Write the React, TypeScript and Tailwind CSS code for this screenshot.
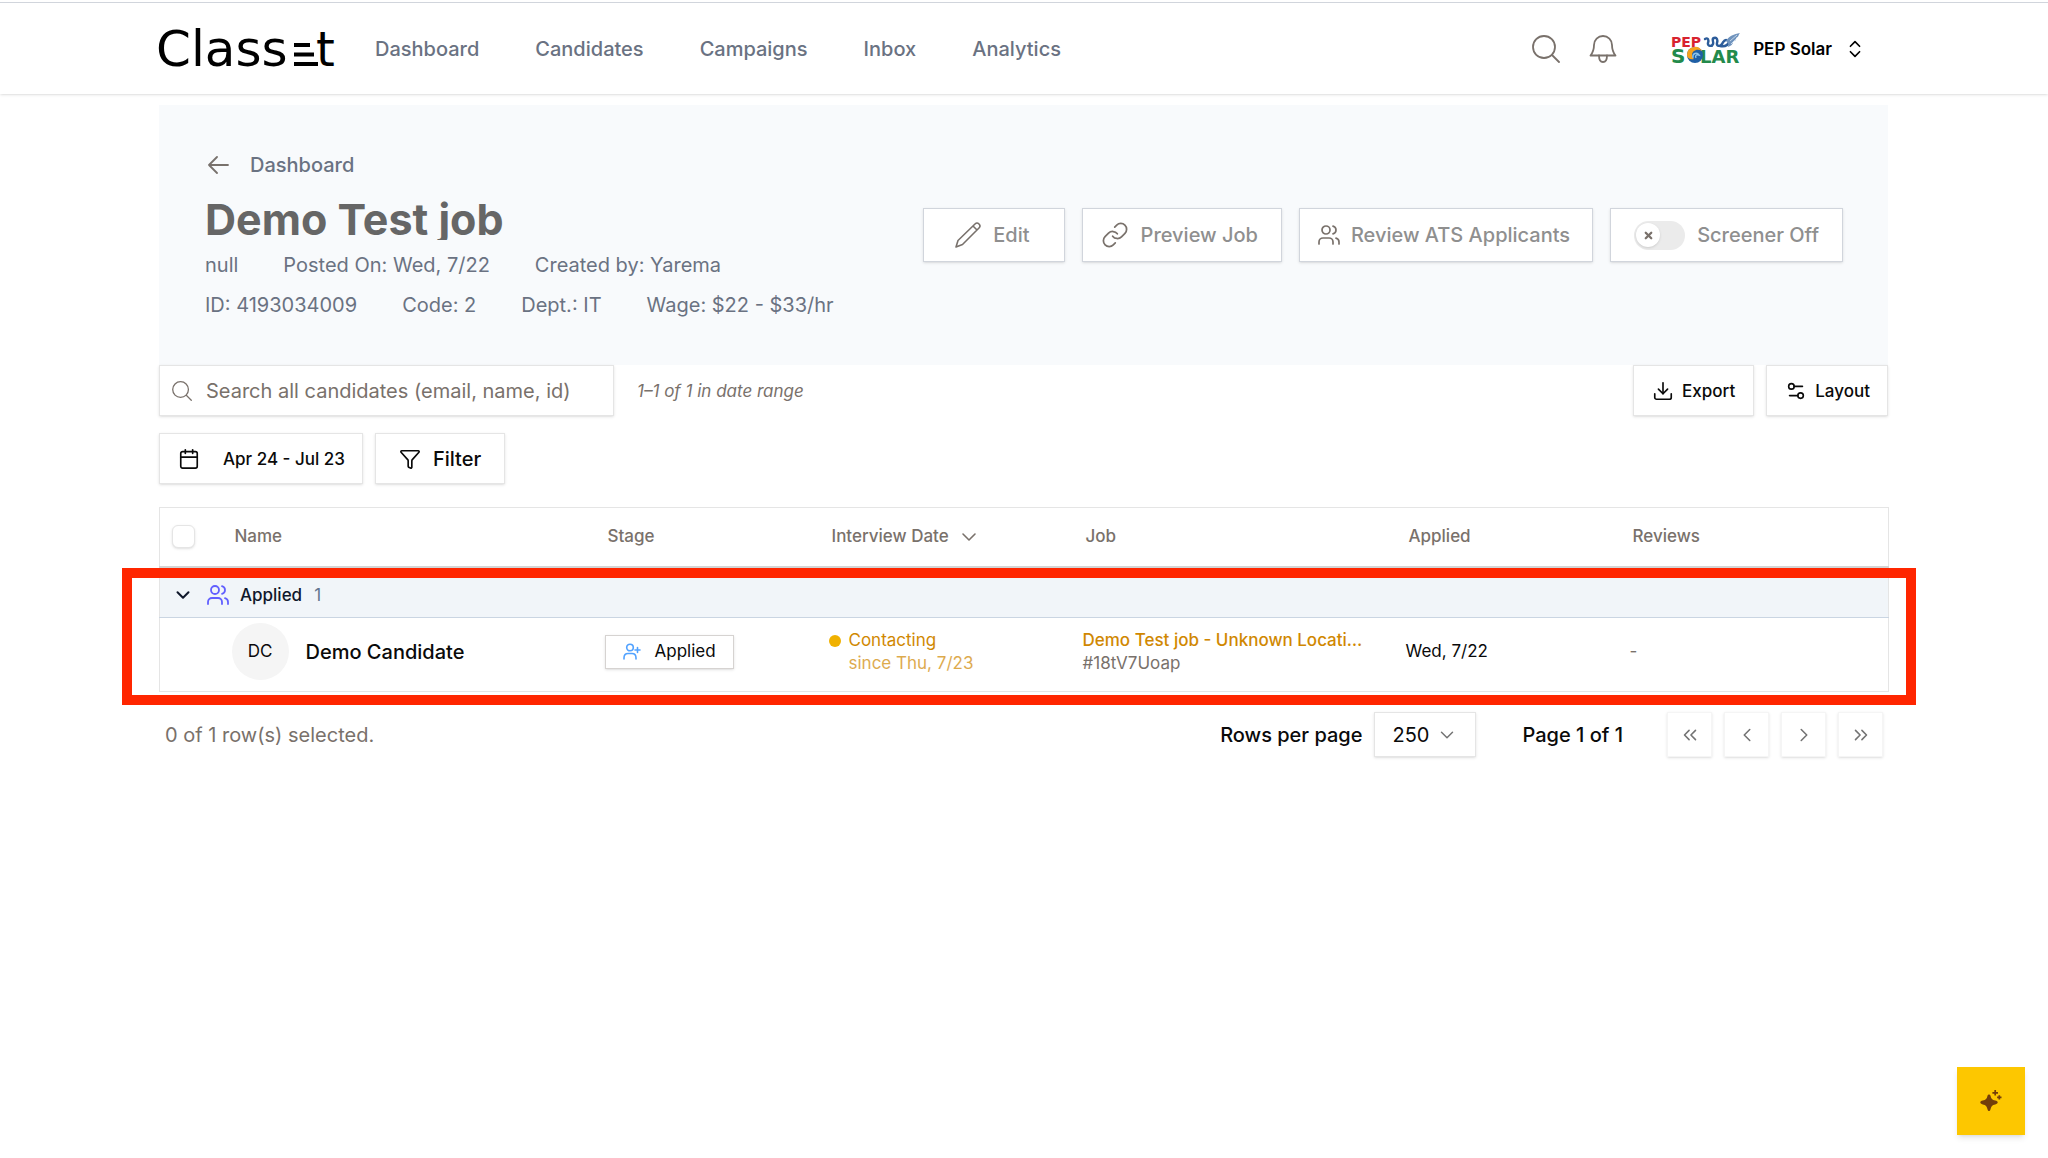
import { useState, type ReactNode } from 'react'
import {
    Calendar,
    ChevronDown,
    ChevronLeft,
    ChevronRight,
    ChevronsLeft,
    ChevronsRight,
    ChevronsUpDown,
    Download,
    Funnel,
    Link,
    Settings2,
    Users,
    X,
} from 'lucide-react'

const navItems = ['Dashboard', 'Candidates', 'Campaigns', 'Inbox', 'Analytics']

const jobDetails = [
    ['null', 'Posted On: Wed, 7/22', 'Created by: Yarema'],
    ['ID: 4193034009', 'Code: 2', 'Dept.: IT', 'Wage: $22 - $33/hr'],
]

const pagerButtons = [
    { label: 'First page', icon: ChevronsLeft },
    { label: 'Previous page', icon: ChevronLeft },
    { label: 'Next page', icon: ChevronRight },
    { label: 'Last page', icon: ChevronsRight },
]

function ClassetLogo() {
    return (
        <svg className="h-[64px] w-[184px]" viewBox="0 0 184 64" role="img" aria-label="Classet">
            <g fontFamily="DejaVu Sans, sans-serif" fontSize="50">
                <text x="1" y="49">Class</text>
                <text x="161" y="49" fontSize="48">t</text>
            </g>
            <path d="M139 26h16v4h-16zM139 35.500h20v4h-20zM139 45h24v4h-24z" />
        </svg>
    )
}

function PepSolarLogo() {
    return (
        <svg className="h-[42px] w-[70px]" viewBox="0 0 70 42" role="img" aria-label="PEP Solar logo">
            <text x="0" y="19" fontFamily="DejaVu Sans, sans-serif" fontWeight="700" fontSize="14" fill="#d8232f">PEP</text>
            <path d="M34 11c3-2 4 1 3 4s4 4 5 1-2-5 1-6 4 2 3 5 3 4 5 1 2-4 4-4M49 18c5 1 8-1 9-4" fill="none" stroke="#2c5c9a" strokeWidth="2.4" strokeLinecap="round" />
            <path d="M55 13C58 8 63 6 69 5c-2 2-1 4-4 5 1 2-2 3-3 4 0 2-2 4-5 5 1-3 0-4-2-6z" fill="#6f93bd" />
            <path d="M59 13l7-6M60 16l5-5" stroke="#dbe6f2" strokeWidth="0.8" />
            <g fontFamily="DejaVu Sans, sans-serif" fontWeight="700" fill="#238a4b">
                <text x="0" y="35" fontSize="20">S</text>
                <text x="29" y="35" fontSize="18">LAR</text>
            </g>
            <circle cx="24" cy="27" r="8" fill="#1f5fa5" />
            <path d="M16 27a8 8 0 0 1 15-4c-5-3-10 0-10 4 0 2 1 3 2 4-4 1-7-1-7-4z" fill="#f6a21d" />
            <path d="M22 30c-1-5 4-6 6-3-3-1-4 1-3 3" fill="none" stroke="#8cc3ea" strokeWidth="1.4" />
        </svg>
    )
}

function SearchIcon({ className }: { className: string }) {
    return (
        <svg className={className} viewBox="0 0 28 28" fill="none" stroke="currentColor" strokeWidth="1.8" strokeLinecap="round">
            <circle cx="12" cy="12" r="11" />
            <path d="M20 20l7 7" />
        </svg>
    )
}

function BellIcon() {
    return (
        <svg className="size-7" viewBox="0 0 28 28" fill="none" stroke="currentColor" strokeWidth="1.8" strokeLinecap="round" strokeLinejoin="round">
            <path d="M14 1c-5 0-9 4-9 9 0 6-1.500 8-3.500 10.500h25C24.500 18 23 16 23 10c0-5-4-9-9-9z" />
            <path d="M10 20.500c0 4 1.500 6.500 4 6.500s4-2.500 4-6.500" />
        </svg>
    )
}

function BackIcon() {
    return (
        <svg className="h-[18px] w-[21px]" viewBox="0 0 21 18" fill="none" stroke="#78716c" strokeWidth="1.8" strokeLinecap="round" strokeLinejoin="round">
            <path d="M20 9H1M9 1L1 9l8 8" />
        </svg>
    )
}

function PencilIcon() {
    return (
        <svg className="size-[26px]" viewBox="0 0 26 26" fill="none" stroke="#78716c" strokeWidth="1.6" strokeLinecap="round" strokeLinejoin="round">
            <path d="M1 25l2-6.500L20 2a2.700 2.700 0 0 1 4 4L7.500 22.500zM18 4l4 4" />
        </svg>
    )
}

function PersonAddIcon() {
    return (
        <svg className="h-[17px] w-[18px] text-blue-400" viewBox="0 0 18 17" fill="none" stroke="currentColor" strokeWidth="1.6" strokeLinecap="round">
            <circle cx="7" cy="4.500" r="3.300" />
            <path d="M1 16v-1c0-3 2-4.500 4-4.500h4c2 0 4 1.500 4 4.500v1M14.500 4.500v5M12 7h5" />
        </svg>
    )
}

function SparkleIcon() {
    return (
        <svg className="size-[22px]" viewBox="0 0 22 22" fill="#733e0a">
            <path d="M9 4.500c.8 0 1.300.6 1.500 1.300.6 3 1.700 4.100 4.700 4.800 1.700.4 2.500 1.100 2.500 1.900s-.8 1.500-2.500 1.900c-3 .7-4.100 1.800-4.700 4.800-.2.900-.7 1.800-1.500 1.800s-1.300-.9-1.500-1.800c-.6-3-1.700-4.100-4.700-4.800C1.100 14 .3 13.300.3 12.500s.8-1.500 2.500-1.900c3-.7 4.100-1.800 4.700-4.800.2-.7.7-1.300 1.500-1.300z" />
            <path d="M15.200 0v5.600M12.400 2.800H18M19.300 5.200v4.400M17.100 7.400h4.400" stroke="#733e0a" strokeWidth="1.700" />
        </svg>
    )
}

function OutlineButton({ children, className }: { children: ReactNode; className: string }) {
    return (
        <button
            type="button"
            className={`flex h-[54px] items-center border border-gray-300 bg-white text-[20px] leading-7 font-medium text-[#8f8f8f] shadow-sm ${className}`}
        >
            {children}
        </button>
    )
}

function Header() {
    return (
        <header className="border-t-2 border-white bg-white shadow-sm">
            <div className="flex h-[92px] items-center border-t border-gray-300 pr-6 pl-[155px]">
                <a href="#home">
                    <ClassetLogo />
                </a>
                <nav className="ml-9 flex gap-14 text-[20px] leading-7 font-medium text-gray-500">
                    {navItems.map(item => (
                        <a key={item} href={`#${item.toLowerCase()}`}>{item}</a>
                    ))}
                </nav>
                <div className="mr-[158px] ml-auto flex items-center text-stone-500">
                    <button type="button" aria-label="Search">
                        <SearchIcon className="size-7" />
                    </button>
                    <button type="button" aria-label="Notifications" className="ml-[29px]">
                        <BellIcon />
                    </button>
                    <button type="button" className="ml-[54px] flex items-center text-[17px] leading-6 font-semibold text-black">
                        <PepSolarLogo />
                        <span className="ml-3">PEP Solar</span>
                        <ChevronsUpDown className="ml-3 size-[22px]" strokeWidth={1.8} />
                    </button>
                </div>
            </div>
        </header>
    )
}

function JobBanner() {
    const [screenerOn, setScreenerOn] = useState(false)

    return (
        <section className="flex h-[260px] items-start justify-between bg-slate-50 pr-[45px] pl-[46px]">
            <div className="pt-[46px] text-[20px] leading-7 text-gray-500">
                <a href="#dashboard" className="flex items-center gap-[21px] pl-[3px] font-medium">
                    <BackIcon />
                    Dashboard
                </a>
                <h1 className="mt-5 truncate text-[43px] leading-[41px] font-bold text-[#666666]">Demo Test job</h1>
                <div className="mt-[11px] flex flex-col gap-3">
                    {jobDetails.map((row, index) => (
                        <div key={index} className="flex gap-[45px]">
                            {row.map(detail => (
                                <span key={detail}>{detail}</span>
                            ))}
                        </div>
                    ))}
                </div>
            </div>
            <div className="mt-[103px] flex gap-[17px]">
                <OutlineButton className="gap-3 pr-[34px] pl-[31px]">
                    <PencilIcon />
                    Edit
                </OutlineButton>
                <OutlineButton className="gap-3 pr-[23px] pl-[18px]">
                    <Link className="size-7 text-stone-500" strokeWidth={1.5} />
                    Preview Job
                </OutlineButton>
                <OutlineButton className="gap-[10px] pr-[22px] pl-[17px]">
                    <Users className="size-6 text-stone-500" strokeWidth={1.7} />
                    Review ATS Applicants
                </OutlineButton>
                <label className="flex h-[54px] items-center gap-3 border border-gray-300 bg-white px-[23px] text-[20px] leading-7 font-medium text-[#8f8f8f] shadow-sm">
                    <input
                        type="checkbox"
                        role="switch"
                        className="peer sr-only"
                        checked={screenerOn}
                        onChange={event => setScreenerOn(event.target.checked)}
                    />
                    <span className="flex h-[29px] w-[51px] items-center rounded-full bg-[#ebebeb] px-[2px] peer-checked:justify-end">
                        <span className="flex size-6 items-center justify-center rounded-full bg-white shadow-sm">
                            <X className="size-[11px] text-stone-500" strokeWidth={5} />
                        </span>
                    </span>
                    {screenerOn ? 'Screener On' : 'Screener Off'}
                </label>
            </div>
        </section>
    )
}

function Toolbar() {
    return (
        <div className="text-[17px] leading-6 font-medium text-neutral-950">
            <div className="flex items-center">
                <label className="flex h-[51px] w-[455px] items-center border border-neutral-200 bg-white pl-3 text-stone-500 shadow-sm">
                    <SearchIcon className="size-5" />
                    <input
                        type="text"
                        aria-label="Search all candidates"
                        placeholder="Search all candidates (email, name, id)"
                        className="ml-[14px] min-w-0 flex-1 text-[20px] leading-7 font-normal outline-none placeholder:text-stone-500"
                    />
                </label>
                <span className="ml-[23px] font-normal text-stone-500 italic">1–1 of 1 in date range</span>
                <button type="button" className="ml-auto flex h-[51px] items-center gap-2 border border-neutral-200 bg-white px-[18px] shadow-sm">
                    <Download className="size-[22px]" strokeWidth={1.8} />
                    Export
                </button>
                <button type="button" className="ml-3 flex h-[51px] items-center gap-2 border border-neutral-200 bg-white pr-[17px] pl-[18px] shadow-sm">
                    <Settings2 className="size-[22px]" strokeWidth={1.8} />
                    Layout
                </button>
            </div>
            <div className="mt-[17px] flex gap-3">
                <button type="button" className="flex h-[51px] items-center gap-[23px] border border-neutral-200 bg-white pr-[17px] pl-[18px] shadow-sm">
                    <Calendar className="size-[22px]" strokeWidth={1.8} />
                    Apr 24 - Jul 23
                </button>
                <button type="button" className="flex h-[51px] items-center gap-3 border border-neutral-200 bg-white px-[23px] text-[20px] leading-7 shadow-sm">
                    <Funnel className="size-[22px]" strokeWidth={1.8} />
                    Filter
                </button>
            </div>
        </div>
    )
}

function CandidateTable() {
    const [open, setOpen] = useState(true)

    return (
        <div className="relative mt-[23px]">
            <table className="w-full table-fixed border-collapse border border-neutral-200 text-left text-[17px] leading-[23px]">
                <colgroup>
                    <col className="w-[63px]" />
                    <col className="w-[373px]" />
                    <col className="w-[224px]" />
                    <col className="w-[254px]" />
                    <col className="w-[323px]" />
                    <col className="w-[224px]" />
                    <col className="w-[268px]" />
                </colgroup>
                <thead>
                    <tr className="h-[59px] border-b-2 border-neutral-300 text-stone-500 [&>th]:pl-3 [&>th]:font-medium">
                        <th>
                            <input
                                type="checkbox"
                                aria-label="Select all rows"
                                className="block size-[23px] appearance-none rounded-md border border-neutral-200 bg-white shadow-sm checked:bg-neutral-800"
                            />
                        </th>
                        <th>Name</th>
                        <th>Stage</th>
                        <th>
                            <button type="button" className="flex items-center gap-2">
                                Interview Date
                                <ChevronDown className="size-6" strokeWidth={1.6} />
                            </button>
                        </th>
                        <th>Job</th>
                        <th>Applied</th>
                        <th>Reviews</th>
                    </tr>
                </thead>
                <tbody>
                    <tr className="h-[51px] border-b border-slate-300 bg-slate-100">
                        <td colSpan={7} className="pt-[6px] pl-3">
                            <button type="button" onClick={() => setOpen(!open)} className="flex items-center font-medium text-slate-900">
                                <ChevronDown className="size-[22px]" strokeWidth={2.2} />
                                <Users className="ml-3 size-6 text-indigo-500" strokeWidth={1.8} />
                                <span className="ml-[10px]">Applied</span>
                                <span className="ml-3 font-normal text-slate-500">1</span>
                            </button>
                        </td>
                    </tr>
                    {open && (
                        <tr className="h-[74px] [&>td]:pb-[6px] [&>td]:pl-[9px]">
                            <td />
                            <td>
                                <div className="flex items-center gap-[17px]">
                                    <span className="flex size-[57px] items-center justify-center rounded-full bg-neutral-100 text-neutral-950">DC</span>
                                    <span className="text-[20px] leading-7 font-medium text-neutral-950">Demo Candidate</span>
                                </div>
                            </td>
                            <td>
                                <button type="button" className="flex h-[34px] items-center gap-[14px] border border-stone-300 bg-white px-[17px] text-neutral-950 shadow-sm">
                                    <PersonAddIcon />
                                    Applied
                                </button>
                            </td>
                            <td>
                                <div className="flex gap-2 text-yellow-600">
                                    <span className="mt-[6px] size-3 rounded-full bg-yellow-500" />
                                    <div>
                                        <div>Contacting</div>
                                        <div className="opacity-70">since Thu, 7/23</div>
                                    </div>
                                </div>
                            </td>
                            <td>
                                <div className="w-[284px] max-w-full">
                                    <a href="#job" className="block truncate font-medium text-yellow-600">Demo Test job - Unknown Location</a>
                                    <div className="text-stone-500">#18tV7Uoap</div>
                                </div>
                            </td>
                            <td className="text-neutral-950">Wed, 7/22</td>
                            <td className="text-stone-500">-</td>
                        </tr>
                    )}
                </tbody>
            </table>
            <div className="pointer-events-none absolute -right-7 -bottom-[13px] -left-[37px] h-[137px] border-[10px] border-[#ff2600]" />
        </div>
    )
}

function TableFooter() {
    return (
        <div className="mt-5 flex items-center pr-[5px] pl-[6px] text-[20px] leading-7 font-medium text-neutral-950">
            <span className="mr-auto font-normal text-stone-500">0 of 1 row(s) selected.</span>
            <label htmlFor="rows-per-page">Rows per page</label>
            <div className="relative ml-3">
                <select
                    id="rows-per-page"
                    defaultValue="250"
                    className="h-[45px] w-[102px] appearance-none border border-neutral-200 bg-white pl-[17px] font-normal shadow-sm"
                >
                    <option>50</option>
                    <option>100</option>
                    <option>250</option>
                </select>
                <ChevronDown className="pointer-events-none absolute top-3 right-[18px] size-[22px] text-neutral-500" strokeWidth={1.6} />
            </div>
            <span className="ml-[46px]">Page 1 of 1</span>
            <div className="ml-11 flex gap-3">
                {pagerButtons.map(({ label, icon: Icon }) => (
                    <button
                        key={label}
                        type="button"
                        aria-label={label}
                        className="flex size-[45px] items-center justify-center border border-neutral-100 bg-white text-neutral-500 shadow-sm"
                    >
                        <Icon className="size-[22px]" strokeWidth={1.7} />
                    </button>
                ))}
            </div>
        </div>
    )
}

export default function App() {
    return (
        <div className="min-h-screen bg-white font-['Inter',sans-serif]">
            <Header />
            <main className="mt-[11px] pr-[160px] pl-[159px]">
                <JobBanner />
                <Toolbar />
                <CandidateTable />
                <TableFooter />
            </main>
            <button
                type="button"
                aria-label="Open assistant"
                className="fixed right-[23px] bottom-[23px] flex size-[68px] items-center justify-center bg-yellow-400 shadow-md"
            >
                <SparkleIcon />
            </button>
        </div>
    )
}
